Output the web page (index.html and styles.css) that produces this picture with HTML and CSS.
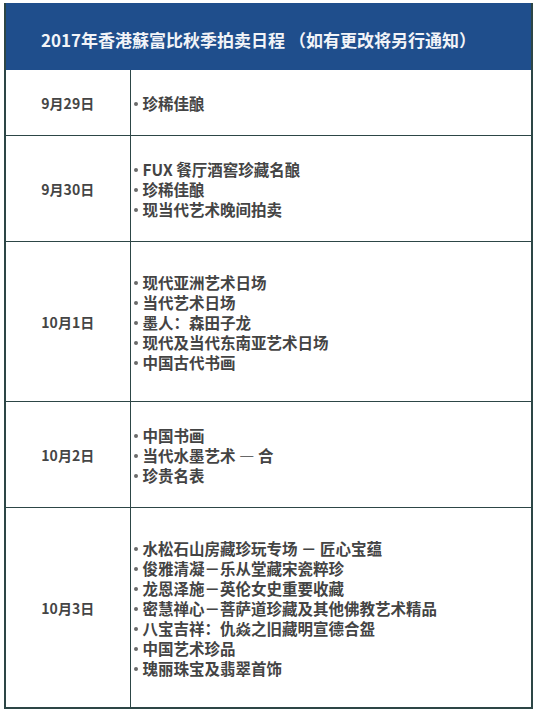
FILE: index.html
```html
<!DOCTYPE html>
<html lang="zh-CN">
<head>
<meta charset="utf-8">
<link rel="stylesheet" href="styles.css">
</head>
<body>
<table class="schedule">
  <colgroup>
    <col class="col-date">
    <col class="col-items">
  </colgroup>
  <thead>
    <tr><th class="title" colspan="2">2017年香港蘇富比秋季拍卖日程 （如有更改将另行通知）</th></tr>
  </thead>
  <tbody>
    <tr>
      <td class="date">9月29日</td>
      <td class="items"><ul><li>珍稀佳酿</li></ul></td>
    </tr>
    <tr>
      <td class="date">9月30日</td>
      <td class="items"><ul><li>FUX 餐厅酒窖珍藏名酿</li><li>珍稀佳酿</li><li>现当代艺术晚间拍卖</li></ul></td>
    </tr>
    <tr class="tall">
      <td class="date">10月1日</td>
      <td class="items"><ul><li>现代亚洲艺术日场</li><li>当代艺术日场</li><li>墨人：森田子龙</li><li>现代及当代东南亚艺术日场</li><li>中国古代书画</li></ul></td>
    </tr>
    <tr>
      <td class="date">10月2日</td>
      <td class="items"><ul><li>中国书画</li><li>当代水墨艺术 — 合</li><li>珍贵名表</li></ul></td>
    </tr>
    <tr class="tall">
      <td class="date">10月3日</td>
      <td class="items"><ul><li>水松石山房藏珍玩专场 － 匠心宝蕴</li><li>俊雅清凝－乐从堂藏宋瓷粹珍</li><li>龙恩泽施－英伦女史重要收藏</li><li>密慧禅心－菩萨道珍藏及其他佛教艺术精品</li><li>八宝吉祥：仇焱之旧藏明宣德合盌</li><li>中国艺术珍品</li><li>瑰丽珠宝及翡翠首饰</li></ul></td>
    </tr>
  </tbody>
</table>
</body>
</html>
```
FILE: styles.css
```css
html, body {
  margin: 0;
  padding: 0;
  background: #ffffff;
}
body {
  padding: 3px 0 0 4px;
  font-family: "Noto Sans CJK SC", "Noto Sans", sans-serif;
}
.schedule {
  width: 527px;
  border-collapse: collapse;
  table-layout: fixed;
  border-left: 2px solid #2d4646;
  border-right: 2px solid #2d4646;
  border-bottom: 2px solid #2d4646;
}
.col-date {
  width: 125px;
}
.col-items {
  width: 402px;
}
.title {
  background: #1f4e8c;
  color: #f2f4f8;
  font-size: 17px;
  font-weight: 700;
  line-height: 20px;
  text-align: left;
  padding: 27px 0 20px 35px;
  white-space: nowrap;
}
.schedule td {
  border: 1px solid #2d4646;
  vertical-align: middle;
}
.schedule tbody tr:first-child td {
  border-top: none;
}
.date {
  text-align: center;
  font-size: 14px;
  font-weight: 700;
  color: #454545;
  padding: 0;
}
.items {
  padding: 23px 0 22px 3px;
}
.tall .items {
  padding: 30px 0 29px 3px;
}
.items ul {
  list-style: none;
  margin: 0;
  padding: 0;
}
.items li {
  display: flex;
  align-items: center;
  font-size: 15.5px;
  font-weight: 700;
  line-height: 20px;
  color: #444444;
  white-space: nowrap;
}
.items li::before {
  content: "";
  width: 4px;
  height: 4px;
  border-radius: 50%;
  background: #6a6a6a;
  margin-right: 5px;
  margin-top: 2px;
  flex: none;
}
```
